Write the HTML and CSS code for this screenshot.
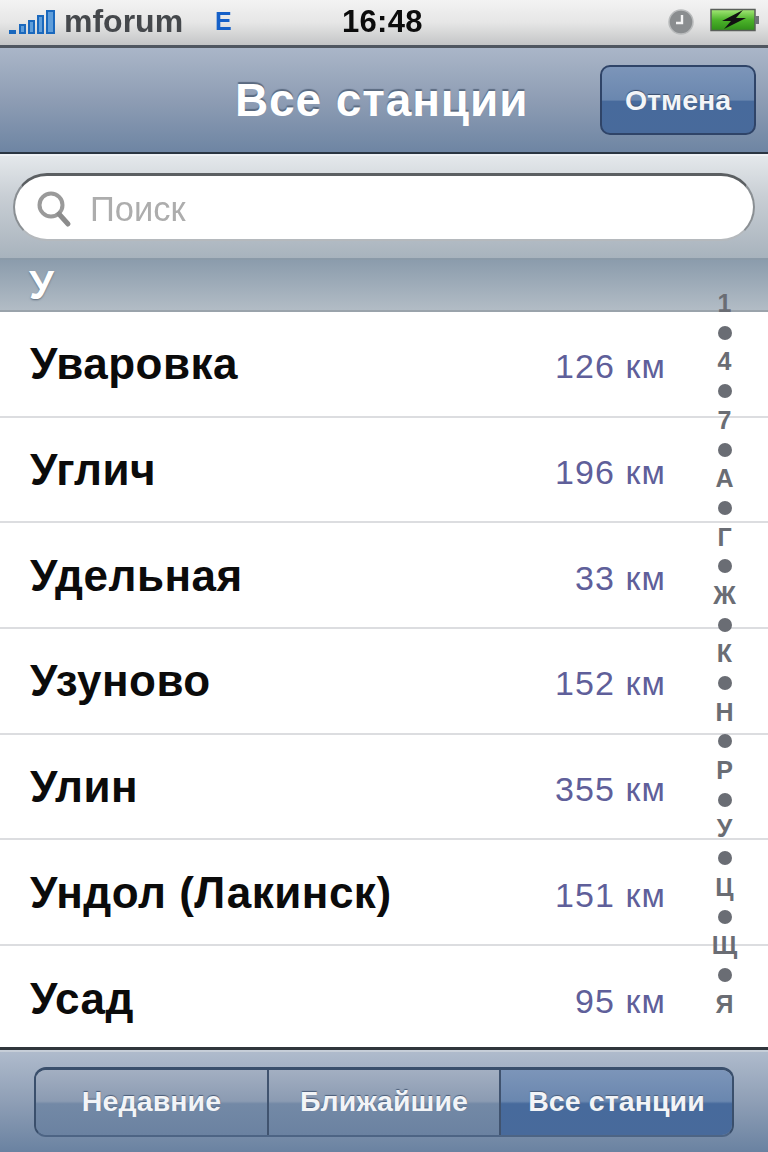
FILE: index.html
```html
<!DOCTYPE html>
<html lang="ru">
<head>
<meta charset="utf-8">
<title>Все станции</title>
<link rel="stylesheet" href="styles.css">
</head>
<body>
<div class="phone">
  <header class="status">
    <svg class="signal" width="46" height="24" viewBox="0 0 46 24">
      <rect x="0" y="20" width="7" height="4" fill="#1a68bd"/>
      <rect x="10" y="14" width="7" height="10" fill="#1a68bd"/>
      <rect x="12" y="16" width="3" height="6" fill="#5f9edb"/>
      <rect x="19" y="10" width="7" height="14" fill="#1a68bd"/>
      <rect x="21" y="12" width="3" height="10" fill="#5f9edb"/>
      <rect x="28" y="5" width="7" height="19" fill="#1a68bd"/>
      <rect x="30" y="7" width="3" height="15" fill="#5f9edb"/>
      <rect x="37" y="0" width="9" height="24" fill="#1a68bd"/>
      <rect x="39" y="2" width="5" height="20" fill="#5f9edb"/>
    </svg>
    <span class="carrier">mforum</span>
    <span class="edge">E</span>
    <span class="time">16:48</span>
    <svg class="clock" width="26" height="26" viewBox="0 0 26 26">
      <circle cx="13" cy="13" r="12" fill="#8a8d8f" stroke="#b9bbbc" stroke-width="1.5"/>
      <path d="M14 6v8H8" fill="none" stroke="#f4f4f4" stroke-width="2.4"/>
    </svg>
    <svg class="battery" width="50" height="26" viewBox="0 0 50 26">
      <defs>
        <linearGradient id="batt" x1="0" y1="0" x2="0" y2="1">
          <stop offset="0" stop-color="#a5e878"/>
          <stop offset="0.5" stop-color="#4cb32a"/>
          <stop offset="1" stop-color="#2f8f18"/>
        </linearGradient>
      </defs>
      <rect x="1" y="1.500" width="44" height="21" fill="url(#batt)" stroke="#5a5f5a" stroke-width="1.5"/>
      <rect x="45" y="8" width="4" height="8" fill="#6d7376"/>
      <path d="M33 2 L12 13 H21 L14 21 L36 10 H26 Z" fill="#111"/>
    </svg>
  </header>

  <nav class="navbar">
    <h1 class="nav-title">Все станции</h1>
    <button class="cancel">Отмена</button>
  </nav>

  <div class="searchbar">
    <div class="field">
      <svg class="loupe" width="36" height="38" viewBox="0 0 36 38">
        <circle cx="15" cy="15" r="11.500" fill="none" stroke="#9a9a9a" stroke-width="4"/>
        <path d="M23 24l9 10" stroke="#8c8c8c" stroke-width="5" stroke-linecap="round"/>
      </svg>
      <span class="placeholder">Поиск</span>
    </div>
  </div>

  <main class="table">
    <div class="section">У</div>
    <ul class="rows">
      <li class="row"><span class="name">Уваровка</span><span class="dist">126 км</span></li>
      <li class="row"><span class="name">Углич</span><span class="dist">196 км</span></li>
      <li class="row"><span class="name">Удельная</span><span class="dist">33 км</span></li>
      <li class="row"><span class="name">Узуново</span><span class="dist">152 км</span></li>
      <li class="row"><span class="name">Улин</span><span class="dist">355 км</span></li>
      <li class="row"><span class="name">Ундол (Лакинск)</span><span class="dist">151 км</span></li>
      <li class="row"><span class="name">Усад</span><span class="dist">95 км</span></li>
    </ul>
    <aside class="index">
      <span>1</span><i></i><span>4</span><i></i><span>7</span><i></i><span>А</span><i></i><span>Г</span><i></i><span>Ж</span><i></i><span>К</span><i></i><span>Н</span><i></i><span>Р</span><i></i><span>У</span><i></i><span>Ц</span><i></i><span>Щ</span><i></i><span>Я</span>
    </aside>
  </main>

  <footer class="tabbar">
    <div class="segments">
      <div class="seg">Недавние</div>
      <div class="seg">Ближайшие</div>
      <div class="seg active">Все станции</div>
    </div>
  </footer>
</div>
</body>
</html>
```
FILE: styles.css
```css
* { box-sizing: border-box; }
html, body { margin: 0; padding: 0; }
body { width: 768px; height: 1152px; overflow: hidden; font-family: "Liberation Sans", Arial, sans-serif; background: #fff; }
.phone { width: 768px; height: 1152px; display: flex; flex-direction: column; filter: blur(0.7px); }

.status {
  height: 48px; flex: none; position: relative; display: flex; align-items: center; padding: 0 0 2px 9px;
  background: linear-gradient(#f3f3f3, #e6e6e6 50%, #c4c5c6);
  border-bottom: 3px solid #4f5660;
}
.signal { flex: none; margin: 1px 9px 0 0; }
.carrier { font-size: 32px; font-weight: 700; color: #45484c; width: 151px; }
.edge { font-size: 25px; font-weight: 700; color: #1560c8; width: 127px; }
.time { font-size: 31px; font-weight: 700; color: #0c0c0c; width: 326px; letter-spacing: 0.3px; }
.clock { flex: none; margin-right: 16px; }
.battery { flex: none; margin-top: -2px; }

.navbar {
  height: 106px; flex: none; display: flex; align-items: center; justify-content: flex-end; position: relative; padding: 0 12px 0 0;
  background: linear-gradient(#aab6c8, #8e9db4 50%, #6e85a3);
  border-bottom: 2px solid #2a3542;
}
.nav-title {
  position: absolute; left: 235px; top: 27px; margin: 0; font-size: 46px; line-height: 50px; font-weight: 700; color: #fff;
  letter-spacing: 0.9px; text-shadow: 0 -2px 1px #5a6a80;
}
.cancel {
  width: 156px; height: 70px; padding: 0; border: 2px solid #2f4468; border-radius: 10px;
  background: linear-gradient(#7c95b9, #6a87af 50%, #476a9c 52%, #486a9b);
  color: #f3f5f8; font: 700 28.5px "Liberation Sans", Arial, sans-serif; text-shadow: 0 -1px 1px #3a4d6c;
}

.searchbar {
  height: 106px; flex: none; padding: 17px 13px 0 13px;
  background: linear-gradient(#e4e8eb, #c8ced4 40%, #a8b3bd);
  border-top: 2px solid #eef1f4;
  border-bottom: 2px solid #8b9aa8;
}
.field {
  height: 68px; display: flex; align-items: center; padding-left: 21px; background: #fff; border-radius: 34px;
  border: 2px solid #8a8f93; border-top: 3px solid #5b5f62; border-bottom-color: #b5b9bd;
}
.loupe { flex: none; margin: 2px 18px 0 0; }
.placeholder { font-size: 34.5px; color: #adadad; padding-top: 3px; }

.table { flex: 1; min-height: 0; position: relative; display: flex; flex-direction: column; overflow: hidden; }
.section {
  height: 52px; flex: none; padding: 0 0 0 29px; font-size: 40px; font-weight: 700; line-height: 50px; color: #fff;
  background: linear-gradient(#8b9cac, #b2bcc5); border-bottom: 2px solid #9aa3ab; text-shadow: 0 1px 2px #5f6d7b;
}
.rows { list-style: none; margin: 0; padding: 0; flex: 1; display: grid; grid-auto-rows: 105.7px; background: #fff; }
.row {
  display: flex; align-items: center; justify-content: space-between; padding: 0 102px 0 30px;
  border-bottom: 2px solid #dcdde0;
}
.row:last-child { border-bottom: 0; }
.name { font-size: 44px; font-weight: 700; color: #0b0b0b; letter-spacing: 0.5px; padding-top: 1px; }
.dist { font-size: 34px; color: #5f5f9a; letter-spacing: 1.1px; padding-top: 6px; }

.index {
  position: absolute; right: 0; top: 29px; width: 86px; display: flex; flex-direction: column; align-items: center; padding-right: 1px;
  color: #6a6d74; font-size: 25px; font-weight: 700;
}
.index span { height: 29.2px; line-height: 29.2px; display: block; }
.index i { width: 14px; height: 14px; margin: 7.6px 0; border-radius: 50%; background: #6a6d74; display: block; }

.tabbar {
  height: 105px; flex: none; padding: 17px 34px 0 34px;
  background: linear-gradient(#b0bccd, #8f9fb6 50%, #6a82a1);
  border-top: 3px solid #30363c;
  box-shadow: inset 0 2px 0 #c6ced8;
}
.segments {
  height: 70px; display: grid; grid-template-columns: 233px 232px 1fr; border-radius: 12px; overflow: hidden;
  border: 2px solid #3a4f6c; border-top-width: 3px; border-bottom-color: #4d6484;
}
.seg {
  display: flex; align-items: center; justify-content: center; font-size: 28.5px; font-weight: 700; color: #f2f4f7; padding-bottom: 2px; letter-spacing: 0.1px;
  background: linear-gradient(#a3afc2, #8b9bb2 48%, #7389a6 52%, #6b82a1);
  border-right: 2px solid #40536f; text-shadow: 0 -1px 1px #4b5d78;
}
.seg.active { border-right: 0; background: linear-gradient(#7c95b9, #6a87af 48%, #476a9c 52%, #486a9b); }
```
